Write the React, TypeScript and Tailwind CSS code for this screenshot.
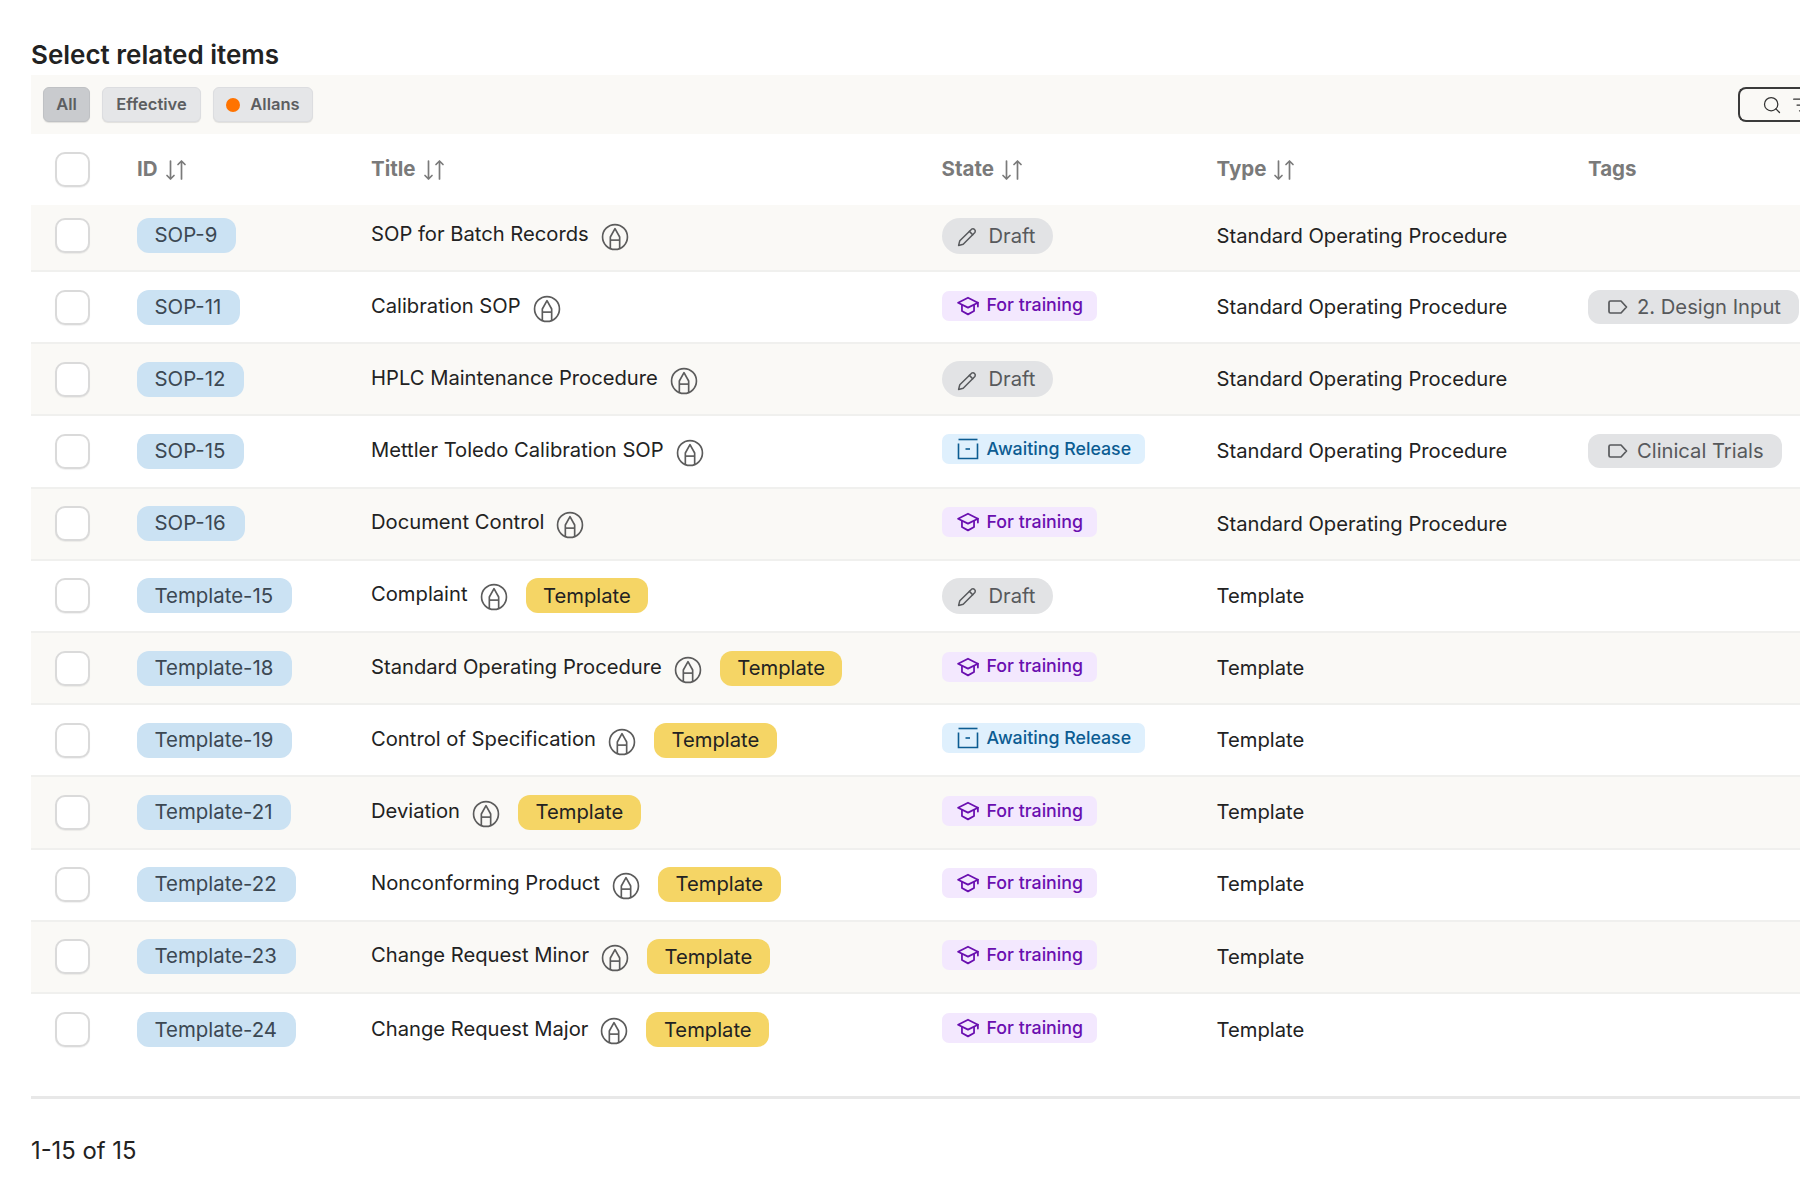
import React from "react";
import { Search, ListFilter } from "lucide-react";

type Row = { id: string; title: string; state: "draft" | "training" | "awaiting"; type: string; tag?: string; tpl?: boolean };

const rows: Row[] = [
  { id: "SOP-9", title: "SOP for Batch Records", state: "draft", type: "Standard Operating Procedure" },
  { id: "SOP-11", title: "Calibration SOP", state: "training", type: "Standard Operating Procedure", tag: "2. Design Input" },
  { id: "SOP-12", title: "HPLC Maintenance Procedure", state: "draft", type: "Standard Operating Procedure" },
  { id: "SOP-15", title: "Mettler Toledo Calibration SOP", state: "awaiting", type: "Standard Operating Procedure", tag: "Clinical Trials" },
  { id: "SOP-16", title: "Document Control", state: "training", type: "Standard Operating Procedure" },
  { id: "Template-15", title: "Complaint", state: "draft", type: "Template", tpl: true },
  { id: "Template-18", title: "Standard Operating Procedure", state: "training", type: "Template", tpl: true },
  { id: "Template-19", title: "Control of Specification", state: "awaiting", type: "Template", tpl: true },
  { id: "Template-21", title: "Deviation", state: "training", type: "Template", tpl: true },
  { id: "Template-22", title: "Nonconforming Product", state: "training", type: "Template", tpl: true },
  { id: "Template-23", title: "Change Request Minor", state: "training", type: "Template", tpl: true },
  { id: "Template-24", title: "Change Request Major", state: "training", type: "Template", tpl: true },
];

function SortIcon() {
  return (
    <svg width="22" height="22" viewBox="0 0 22 22" fill="none" stroke="#7a7a7a" strokeWidth="1.7" strokeLinecap="round" strokeLinejoin="round" className="ml-[7px] shrink-0">
      <path d="M5.5 2v18M2 16.5 5.5 20 9 16.5" />
      <path d="M16.5 20V2M13 5.5 16.5 2 20 5.5" />
    </svg>
  );
}

function NibCircle() {
  return (
    <svg width="28" height="28" viewBox="0 0 27 27" fill="none" stroke="#5c5c5c" strokeWidth="1.6" strokeLinejoin="round" className="shrink-0 mt-[3px]">
      <circle cx="13.5" cy="13.5" r="12" />
      <path d="M9 25V13.5L13.5 5.5 18 13.5V25" />
      <path d="M9 16.5h9" />
    </svg>
  );
}

function Checkbox() {
  return <div className="w-[35px] h-[35px] rounded-[10px] bg-white border-2 border-[#dadada] shadow-[0_1px_1px_rgba(0,0,0,0.06)] shrink-0" />;
}

function HeaderCell({ label, sort = true, className }: { label: string; sort?: boolean; className: string }) {
  return (
    <div className={`flex items-center shrink-0 text-[20.5px] font-bold text-[#7a7a7a] ${className}`}>
      {label}
      {sort && <SortIcon />}
    </div>
  );
}

function StateBadge({ state }: { state: Row["state"] }) {
  if (state === "draft") {
    return (
      <div className="inline-flex items-center h-[36px] pl-[15px] pr-[18px] rounded-full bg-[#e2e3e5] text-[#57595c] text-[20.2px]">
        <svg width="20" height="20" viewBox="0 0 20 20" fill="none" stroke="#57595c" strokeWidth="1.5" strokeLinejoin="round" strokeLinecap="round" className="mr-[12px] mt-[3px] shrink-0">
          <path d="M14.6 2.2a2.4 2.4 0 0 1 3.3 3.3L6.2 17.2 1.6 18.4l1.2-4.6z" />
          <path d="M12.4 4.4l3.3 3.3" />
        </svg>
        Draft
      </div>
    );
  }
  if (state === "training") {
    return (
      <div className="inline-flex items-center h-[30px] pl-[15px] pr-[14px] rounded-[7px] bg-[#f3e8fe] text-[#6a0fb0] text-[17.8px] font-medium -mt-[2px]">
        <svg width="22" height="20" viewBox="0 0 20 18" fill="none" stroke="#6a0fb0" strokeWidth="1.6" strokeLinejoin="round" strokeLinecap="round" className="mr-[8px] shrink-0">
          <path d="M1 6 10 1.5 19 6 10 10.5z" />
          <path d="M4.5 8.2v5.4L10 16.6l5.5-3V8.2" />
          <path d="M19 6v3.5" />
        </svg>
        For training
      </div>
    );
  }
  return (
    <div className="inline-flex items-center h-[30px] pl-[15px] pr-[14px] rounded-[7px] bg-[#dff0fd] text-[#0c5c92] text-[17.8px] font-medium -mt-[2px]">
      <svg width="22" height="22" viewBox="0 0 22 22" fill="none" stroke="#0c5c92" strokeWidth="1.6" className="mr-[8px] shrink-0">
        <path d="M1.5 1.5h19" />
        <path d="M1.5 5.5v15h19v-15" />
        <path d="M8.5 11h4.5" />
      </svg>
      Awaiting Release
    </div>
  );
}

function TagBadge({ label }: { label: string }) {
  return (
    <div className="inline-flex items-center h-[34px] pl-[19px] pr-[18px] rounded-[12px] bg-[#e2e3e5] text-[#57595c] text-[20.2px] whitespace-nowrap">
      <svg width="22" height="18" viewBox="0 0 22 18" fill="none" stroke="#57595c" strokeWidth="1.7" strokeLinejoin="round" className="mr-[8px] shrink-0">
        <path d="M3.5 3h10.5l5.5 6-5.5 6H3.5a1.5 1.5 0 0 1-1.5-1.5v-9A1.5 1.5 0 0 1 3.5 3z" />
      </svg>
      {label}
    </div>
  );
}

function TableRow({ row, index, last }: { row: Row; index: number; last: boolean }) {
  const first = index === 0;
  return (
    <div
      className={`flex items-center ${last ? "" : "border-b-2 border-[#f0f0ee]"} ${index % 2 === 0 ? "bg-[#faf9f6]" : "bg-white"} ${first ? "h-[67px] pb-[3.5px]" : "h-[72.2px]"}`}
    >
      <div className="w-[106px] pl-[24px] shrink-0">
        <Checkbox />
      </div>
      <div className="w-[234px] shrink-0">
        <span className="inline-flex items-center h-[35px] pl-[17.5px] pr-[19px] rounded-[12px] bg-[#cbe2f3] text-[#3c4853] text-[20.4px]">{row.id}</span>
      </div>
      <div className="w-[570.5px] shrink-0 flex items-center text-[20.2px] text-[#222222]">
        <span className="-mt-[2.5px]">{row.title}</span>
        <span className="ml-[12px]"><NibCircle /></span>
        {row.tpl && (
          <span className="ml-[18px] inline-flex items-center h-[35px] px-[17.5px] rounded-[12px] bg-[#f5d565] text-[#222222] text-[20.2px]">Template</span>
        )}
      </div>
      <div className="w-[275px] shrink-0">
        <StateBadge state={row.state} />
      </div>
      <div className="w-[371.5px] shrink-0 text-[20.2px] text-[#222222]">{row.type}</div>
      <div className="shrink-0">{row.tag && <TagBadge label={row.tag} />}</div>
    </div>
  );
}

export default function App() {
  return (
    <div className="w-[1800px] h-[1200px] overflow-hidden bg-white pl-[31px] font-['Inter',sans-serif]">
      <h1 className="pt-[38px] h-[75px] text-[26px] leading-[34px] font-semibold text-[#222222]">Select related items</h1>
      <div className="h-[59px] w-[1769px] bg-[#faf9f6] flex items-center pl-[12px] text-[16.5px] font-semibold text-[#5c5e61]">
        <div className="w-[47px] h-[35px] flex items-center justify-center rounded-[6px] bg-[#c9cbce] border border-[#bfc1c4] shadow-[0_1px_1px_rgba(0,0,0,0.1)]">All</div>
        <div className="ml-[12px] w-[99px] h-[35px] flex items-center justify-center rounded-[6px] bg-[#e5e6e8] border border-[#dcdde0] shadow-[0_1px_1px_rgba(0,0,0,0.1)]">Effective</div>
        <div className="ml-[12px] w-[100px] h-[35px] flex items-center justify-center rounded-[6px] bg-[#e5e6e8] border border-[#dcdde0] shadow-[0_1px_1px_rgba(0,0,0,0.1)]">
          <span className="w-[14px] h-[14px] rounded-full bg-[#ff7300] mr-[10px]" />
          Allans
        </div>
        <div className="ml-auto w-[62px] h-[35px] flex items-center pl-[22px] rounded-l-[8px] border-2 border-r-0 border-[#3a3a3a] gap-[10px] shrink-0 overflow-hidden">
          <Search size={20} strokeWidth={1.5} color="#333333" className="shrink-0" />
          <ListFilter size={20} strokeWidth={1.5} color="#333333" className="shrink-0" />
        </div>
      </div>
      <div className="flex items-center h-[71px] bg-white">
        <div className="w-[106px] pl-[24px] shrink-0">
          <Checkbox />
        </div>
        <HeaderCell label="ID" className="w-[234px]" />
        <HeaderCell label="Title" className="w-[570.5px]" />
        <HeaderCell label="State" className="w-[275px]" />
        <HeaderCell label="Type" className="w-[371.5px]" />
        <HeaderCell label="Tags" sort={false} className="w-[180px]" />
      </div>
      {rows.map((r, i) => (
        <TableRow key={r.id} row={r} index={i} last={i === rows.length - 1} />
      ))}
      <div className="mt-[30px] h-[3px] bg-[#e8e8e8]" />
      <div className="mt-[36px] text-[23.8px] leading-[32px] text-[#222222]">1-15 of 15</div>
    </div>
  );
}
